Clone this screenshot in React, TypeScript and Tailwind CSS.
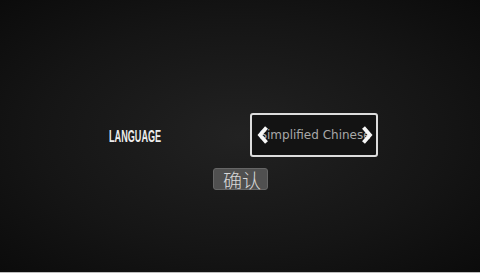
const Chevron = ({ dir }: { dir: "left" | "right" }) => (
    <svg width="12" height="20" viewBox="0 0 12 20" className="block">
        <polyline
            points={dir === "left" ? "9.5,2.5 3,10 9.5,17.5" : "2.5,2.5 9,10 2.5,17.5"}
            fill="none"
            stroke="#f6f6f6"
            strokeWidth="3.8"
            strokeLinejoin="miter"
        />
    </svg>
);

export default function App() {
    return (
        <div className="w-[480px] h-[273px] flex flex-col overflow-hidden">
            <div className="flex-1 flex flex-col pt-[113px] bg-[radial-gradient(ellipse_at_50%_50%,#222222_0%,#151515_60%,#0b0b0b_100%)]">
                <div className="flex items-center pl-[109px]">
                    <span
                        className="w-[141px] text-[16px] leading-none font-bold text-[#ececec] inline-block origin-left scale-x-[0.57] pt-[4px]"
                        style={{ fontFamily: '"Liberation Sans", Arial, sans-serif' }}
                    >
                        LANGUAGE
                    </span>
                    <div className="relative w-[128px] h-[44px] border-2 border-[#dcdcdc] rounded-[3px] bg-[#131313] flex items-center justify-center">
                        <span
                            className="text-[12px] text-[#a8a8a8] leading-none pl-[2px]"
                            style={{ fontFamily: '"DejaVu Sans", sans-serif' }}
                        >
                            Simplified Chinese
                        </span>
                        <div className="absolute left-[5px] top-1/2 -translate-y-1/2">
                            <Chevron dir="left" />
                        </div>
                        <div className="absolute right-[3px] top-1/2 -translate-y-1/2">
                            <Chevron dir="right" />
                        </div>
                    </div>
                </div>
                <button
                    className="mt-[11px] ml-[213px] w-[55px] h-[22px] rounded-[3px] bg-[#505050] border border-[#666] flex items-center justify-center pl-[3px] text-[19px] leading-none text-[#d8d8d8] font-light"
                    style={{ fontFamily: '"Noto Sans CJK SC", sans-serif' }}
                >
                    确认
                </button>
            </div>
            <div className="h-px bg-[#bdbdbd]" />
        </div>
    );
}
